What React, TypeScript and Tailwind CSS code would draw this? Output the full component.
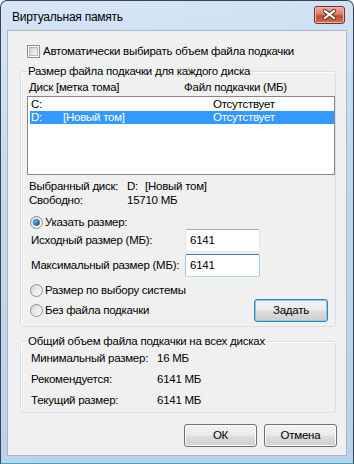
const Checkbox = () => (
  <div className="w-[13px] h-[13px] border border-[#8e8f8f] bg-white p-[1px] shrink-0">
    <div className="w-full h-full border border-[#b4b8bd] bg-gradient-to-br from-[#d0d3d7] to-[#f4f4f4]"></div>
  </div>
);

const Radio = ({ checked }: { checked?: boolean }) => (
  <div className="w-[13px] h-[13px] rounded-full border border-[#8e8f8f] bg-gradient-to-br from-[#cfd2d6] via-[#ebebeb] to-[#fafafa] flex items-center justify-center shrink-0">
    {checked && (
      <div className="w-[7px] h-[7px] rounded-full border border-[#1b5d8f] bg-gradient-to-br from-[#8fd6fb] via-[#2f93d6] to-[#17508b]"></div>
    )}
  </div>
);

const Button = ({ label, focused, className }: { label: string; focused?: boolean; className?: string }) => (
  <div
    className={`w-[73px] h-[23px] rounded-[3px] border flex items-center justify-center bg-[linear-gradient(#f2f2f2_0%,#ebebeb_48%,#dddddd_52%,#cfcfcf_100%)] ${
      focused
        ? "border-[#3c7fb1] shadow-[inset_0_0_0_1px_#7ed0f2]"
        : "border-[#707070] shadow-[inset_0_0_0_1px_#fbfbfb]"
    } ${className ?? ""}`}
  >
    {label}
  </div>
);

const Input = ({ value, focused }: { value: string; focused?: boolean }) => (
  <div
    className={`w-[75px] h-[23px] rounded-[2px] border bg-white pl-[4px] flex items-center shrink-0 ${
      focused
        ? "border-[#a4c9e3] border-t-[#3d7bad] border-b-[#b7d9ed]"
        : "border-[#e2e3ea] border-t-[#abadb3] border-b-[#e3e9ef]"
    }`}
  >
    {value}
  </div>
);

const CloseButton = () => (
  <div className="w-[31px] h-[18px] rounded-[3px] border border-[#7b2f25] bg-[linear-gradient(#e9a99a_0%,#d77f6c_45%,#c44a35_55%,#cf6b55_100%)] shadow-[inset_0_0_0_1px_#f0b7a8] flex items-center justify-center">
    <svg width="13" height="11" viewBox="0 0 13 11">
      <path d="M2 2 L11 9 M11 2 L2 9" stroke="#5a2a22" strokeWidth="4" strokeLinecap="square" />
      <path d="M2 2 L11 9 M11 2 L2 9" stroke="#ffffff" strokeWidth="2.2" strokeLinecap="square" />
    </svg>
  </div>
);

export default function App() {
  return (
    <div className="w-[354px] h-[464px] flex flex-col rounded-t-[7px] border border-[#3b4350] border-b-[#2fb0c8] bg-[linear-gradient(170deg,#d6e6f7_0%,#c3d8ee_40%,#b9d1ea_100%)] px-[6px] pb-[7px] text-[11.5px] tracking-[-0.25px] leading-[15px] text-black whitespace-nowrap font-['Liberation_Sans',Arial,sans-serif] overflow-hidden">
      {/* title bar */}
      <div className="h-[29px] flex items-center justify-between shrink-0">
        <div className="pl-[5px] pt-[4px] text-[12px] text-black">Виртуальная память</div>
        <div className="mr-[2px] mt-[-2px]">
          <CloseButton />
        </div>
      </div>

      {/* client area */}
      <div className="flex-1 min-h-0 border border-[#a9b7c6] bg-[#f0f0f0] flex flex-col pl-[12px] pr-[10px]">
        <div className="mt-[13px] ml-[7px] flex items-center gap-[3px]">
          <Checkbox />
          <span>Автоматически выбирать объем файла подкачки</span>
        </div>

        <fieldset className="mt-[5px] border border-[#d5dfe5] rounded-[3px] shadow-[inset_1px_1px_0_#fff] pl-[6px] pb-[4px] flex flex-col">
          <legend className="px-[1px] leading-[15px]">Размер файла подкачки для каждого диска</legend>
          <div className="mt-[1px] h-[15px] grid grid-cols-[155px_1fr] pl-[2px]">
            <span>Диск [метка тома]</span>
            <span>Файл подкачки (МБ)</span>
          </div>
          <div className="mt-[1px] h-[79px] border border-[#828790] bg-white pt-[1px] leading-[13px]">
            <div className="h-[13px] ml-[2px] pl-[1px] grid grid-cols-[32px_150px_1fr]">
              <span>C:</span>
              <span></span>
              <span>Отсутствует</span>
            </div>
            <div className="h-[13px] ml-[2px] pl-[1px] grid grid-cols-[32px_150px_1fr] bg-[#3399ff] text-white">
              <span>D:</span>
              <span>[Новый том]</span>
              <span>Отсутствует</span>
            </div>
          </div>

          <div className="mt-[4px] pl-[2px] leading-[14px] grid grid-cols-[98px_18px_1fr]">
            <span>Выбранный диск:</span>
            <span>D:</span>
            <span>[Новый том]</span>
            <span>Свободно:</span>
            <span className="col-span-2">15710 МБ</span>
          </div>

          <div className="mt-[9px] ml-[3px] h-[13px] flex items-center gap-[2px]">
            <Radio checked />
            <span>Указать размер:</span>
          </div>
          <div className="flex items-center">
            <span className="ml-[4px] w-[154px]">Исходный размер (МБ):</span>
            <Input value="6141" />
          </div>
          <div className="mt-[2px] flex items-center">
            <span className="ml-[4px] w-[154px]">Максимальный размер (МБ):</span>
            <Input value="6141" focused />
          </div>
          <div className="mt-[7px] ml-[3px] h-[13px] flex items-center gap-[2px]">
            <Radio />
            <span>Размер по выбору системы</span>
          </div>
          <div className="mt-[2px] flex items-center justify-between pr-[7px]">
            <div className="ml-[3px] flex items-center gap-[2px]">
              <Radio />
              <span>Без файла подкачки</span>
            </div>
            <Button label="Задать" focused className="w-[74px] h-[22px]" />
          </div>
        </fieldset>

        <fieldset className="mt-[7px] border border-[#d5dfe5] rounded-[3px] shadow-[inset_1px_1px_0_#fff] pl-[6px] pb-[1px]">
          <legend className="px-[1px] leading-[15px]">Общий объем файла подкачки на всех дисках</legend>
          <div className="mt-[-1px] ml-[4px] grid grid-cols-[126px_1fr] leading-[21px]">
            <span>Минимальный размер:</span>
            <span>16 МБ</span>
            <span>Рекомендуется:</span>
            <span>6141 МБ</span>
            <span>Текущий размер:</span>
            <span>6141 МБ</span>
          </div>
        </fieldset>

        <div className="mt-[11px] mr-[-1px] flex justify-end gap-[7px]">
          <Button label="ОК" />
          <Button label="Отмена" />
        </div>
      </div>
    </div>
  );
}
